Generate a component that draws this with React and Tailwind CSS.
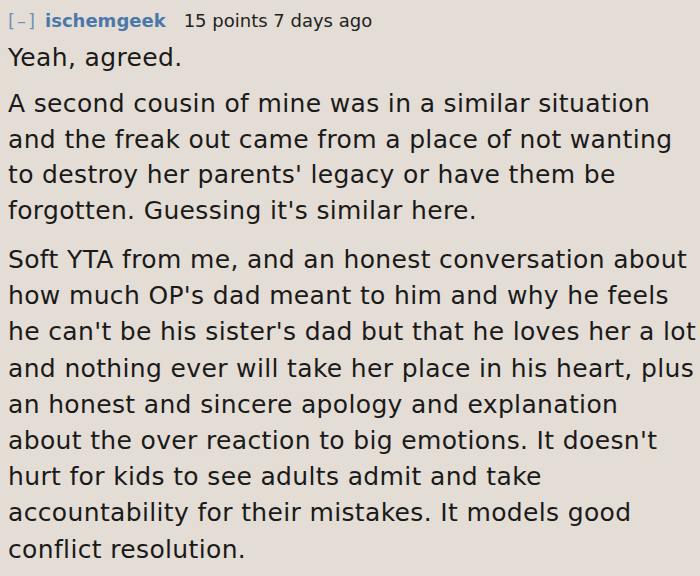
import React from 'react'

const paragraphs = [
  { lines: ['Yeah, agreed.'], lh: 'leading-[36px]', mb: 'mb-[10px]' },
  {
    lines: [
      'A second cousin of mine was in a similar situation',
      'and the freak out came from a place of not wanting',
      "to destroy her parents' legacy or have them be",
      "forgotten. Guessing it's similar here.",
    ],
    lh: 'leading-[35.5px]',
    mb: 'mb-[14px]',
  },
  {
    lines: [
      'Soft YTA from me, and an honest conversation about',
      "how much OP's dad meant to him and why he feels",
      "he can't be his sister's dad but that he loves her a lot",
      'and nothing ever will take her place in his heart, plus',
      'an honest and sincere apology and explanation',
      "about the over reaction to big emotions. It doesn't",
      'hurt for kids to see adults admit and take',
      'accountability for their mistakes. It models good',
      'conflict resolution.',
    ],
    lh: 'leading-[36.2px]',
    mb: 'mb-0',
  },
]

export default function App() {
  return (
    <div className="w-[700px] h-[576px] overflow-hidden bg-[#e4ddd5] font-['DejaVu_Sans',sans-serif] text-[#1a1a1a] px-[8px] pt-[9px]">
      <div className="flex items-baseline text-[18px] leading-[24px]">
        <span className="text-[#7391b8] tracking-[2px]">[–]</span>
        <span className="ml-[8px] font-bold text-[#4b78aa]">ischemgeek</span>
        <span className="ml-[18px] text-[#222]">15 points 7 days ago</span>
      </div>
      <div className="mt-[7px] text-[25px] tracking-[0.35px]">
        {paragraphs.map((p, i) => (
          <p key={i} className={`${p.lh} ${p.mb}`}>
            {p.lines.map((l, j) => (
              <span key={j} className="block whitespace-nowrap">{l}</span>
            ))}
          </p>
        ))}
      </div>
    </div>
  )
}
